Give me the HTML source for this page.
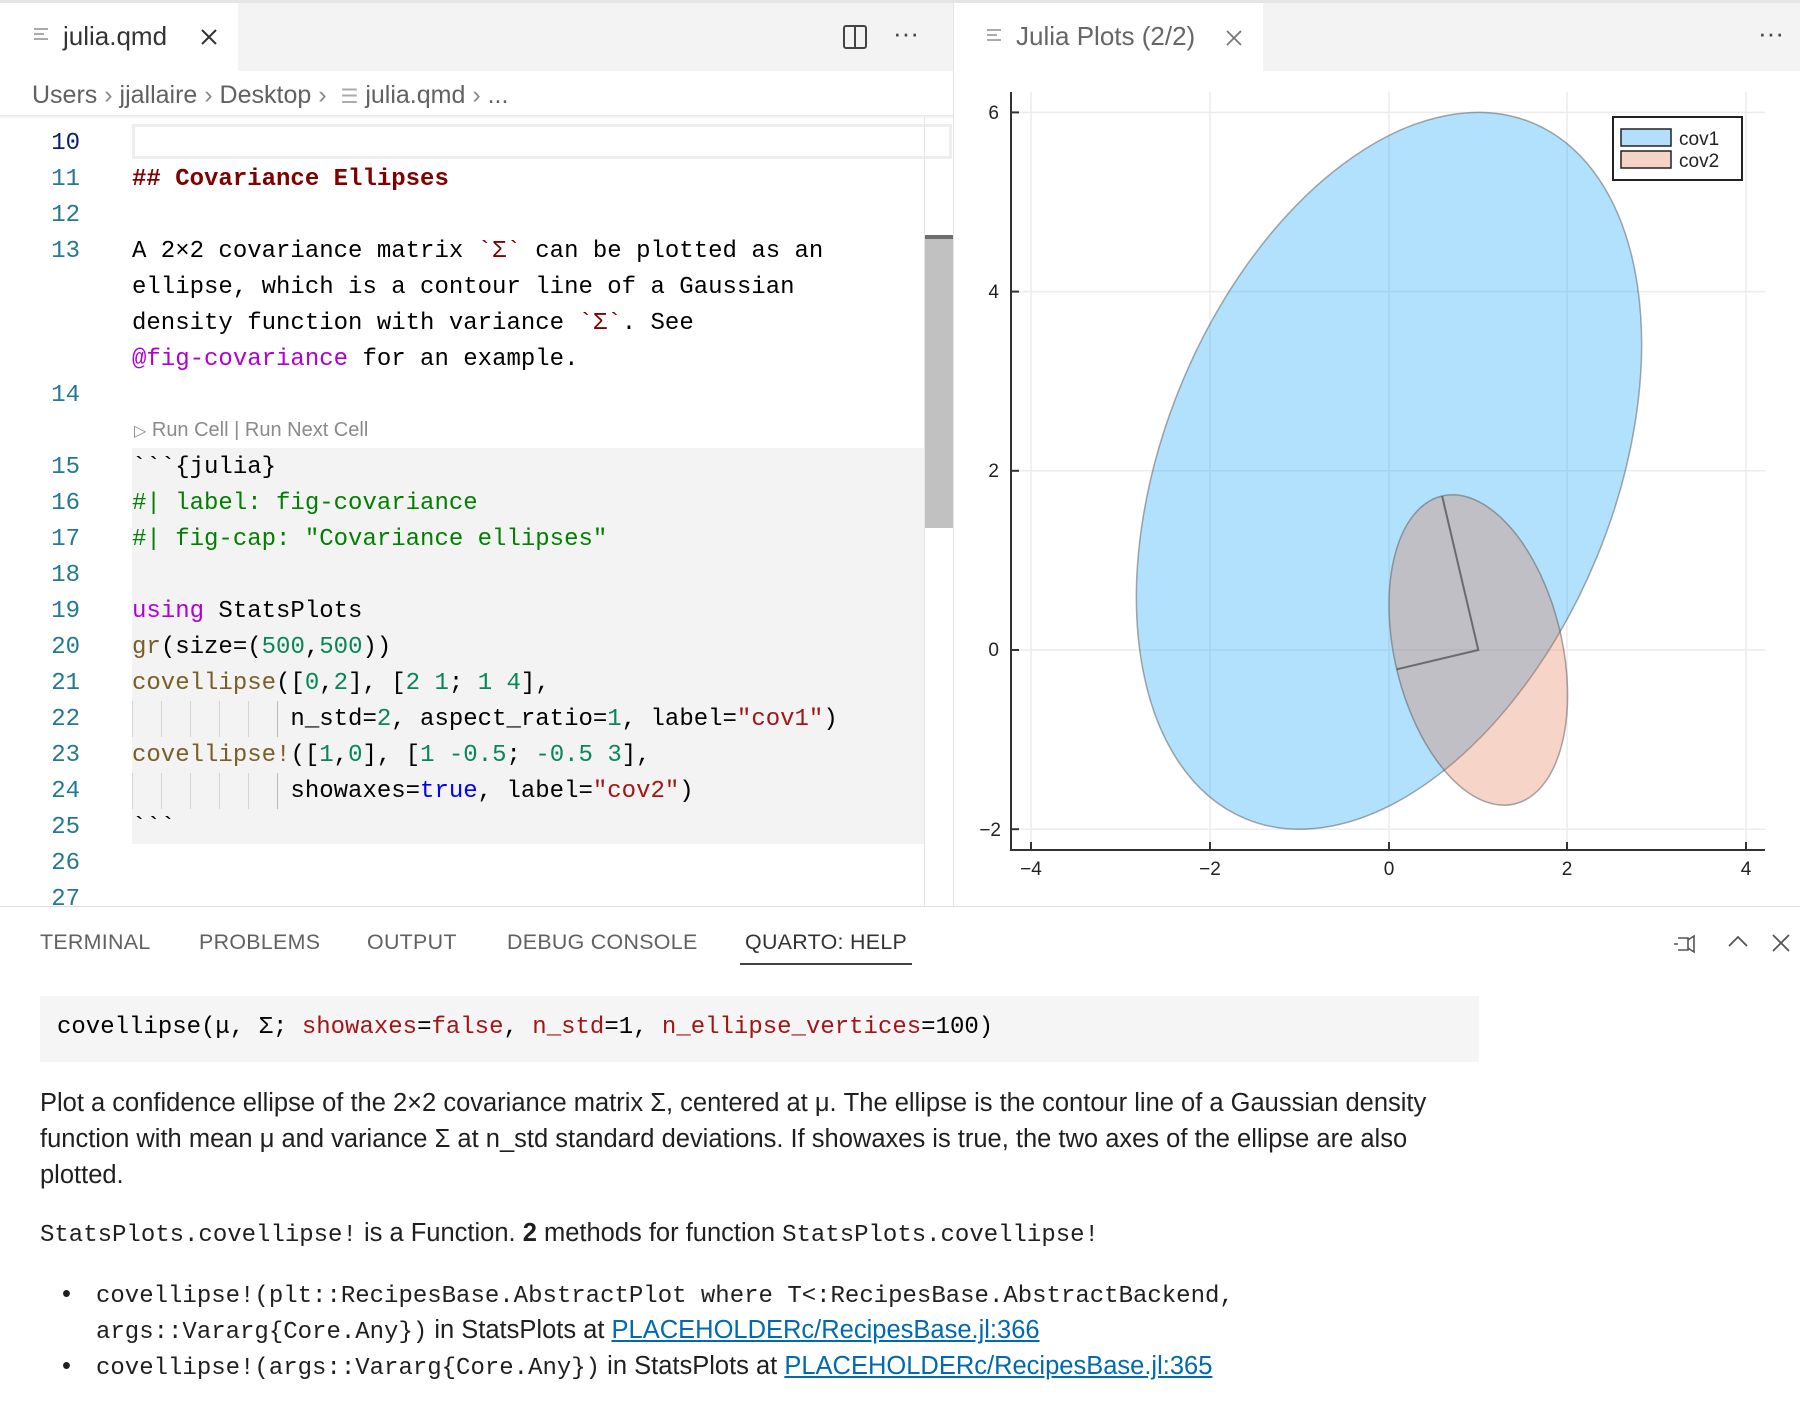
<!DOCTYPE html>
<html><head><meta charset="utf-8"><style>
*{margin:0;padding:0;box-sizing:border-box}
body{width:1800px;height:1406px;background:#fff;position:relative;overflow:hidden;font-family:"Liberation Sans",sans-serif}
.abs{position:absolute}
.mono{font-family:"Liberation Mono","DejaVu Sans Mono",monospace}
.ln{position:absolute;left:0;width:80px;text-align:right;color:#237893;font-size:24px;line-height:36px}
.cl{position:absolute;left:132px;font-size:24px;line-height:36px;white-space:pre;color:#000}
.bc{color:#616161;font-size:25px}
.pt{position:absolute;top:930px;font-size:21.4px;color:#616161;letter-spacing:.3px}
.hp{position:absolute;left:40px;font-size:25.5px;line-height:36px;color:#1f1f1f;white-space:nowrap}
.hp code,.hc{font-family:"Liberation Mono",monospace;font-size:24px}
a{color:#006ab1;text-decoration:underline}
.g{position:absolute;width:1px;height:36px;background:#d4d4d4}
</style></head><body>
<div class="abs" style="left:0;top:0;width:1800px;height:3px;background:#e5e5e5"></div>
<div class="abs" style="left:0;top:3px;width:953px;height:68px;background:#f3f3f3"></div>
<div class="abs" style="left:0;top:3px;width:238px;height:68px;background:#fff"></div>
<div class="abs" style="left:34px;top:28px;width:16px;height:16px">
<div style="height:2px;background:#aaa;margin-bottom:3px;width:14px"></div><div style="height:2px;background:#aaa;margin-bottom:3px;width:10px"></div><div style="height:2px;background:#aaa;margin-bottom:3px;width:14px"></div></div>
<div class="abs" style="left:63px;top:21px;font-size:26px;color:#333">julia.qmd</div>
<svg class="abs" style="left:199px;top:27px" width="20" height="20"><path d="M3 3L17 17M17 3L3 17" stroke="#333" stroke-width="2"/></svg>
<svg class="abs" style="left:842px;top:24px" width="26" height="26"><rect x="2" y="2" width="22" height="22" rx="2" fill="none" stroke="#444" stroke-width="2"/><line x1="13" y1="2" x2="13" y2="24" stroke="#444" stroke-width="2"/></svg>
<div class="abs" style="left:893px;top:18px;font-size:26px;color:#444">···</div>
<div class="abs bc" style="left:32px;top:81px;white-space:nowrap">Users <span style="color:#888">›</span> jjallaire <span style="color:#888">›</span> Desktop <span style="color:#888">›</span> &nbsp;<span style="color:#aaa;font-size:20px">☰</span> julia.qmd <span style="color:#888">›</span> ...</div>
<div class="abs" style="left:0;top:115px;width:953px;height:4px;background:linear-gradient(#e8e8e8,#fff)"></div>
<div class="abs" style="left:132px;top:124px;width:820px;height:35px;border:3px solid #eeeeee"></div>
<div class="abs" style="left:132px;top:448px;width:792px;height:396px;background:#f3f3f3"></div>
<div class="abs" style="left:924px;top:117px;width:1px;height:790px;background:#e5e5e5"></div>
<div class="abs" style="left:925px;top:235px;width:28px;height:293px;background:#c1c1c1"></div>
<div class="abs" style="left:925px;top:235px;width:28px;height:4px;background:#6e6e6e"></div>
<div class="abs" style="left:953px;top:3px;width:1px;height:904px;background:#e5e5e5"></div>
<div class="mono" style="position:absolute;left:0;top:3px;width:953px;height:0">
<div class="ln" style="top:123px;color:#0b216f">10</div>
<div class="ln" style="top:159px">11</div>
<div class="ln" style="top:195px">12</div>
<div class="ln" style="top:231px">13</div>
<div class="ln" style="top:375px">14</div>
<div class="ln" style="top:447px">15</div>
<div class="ln" style="top:483px">16</div>
<div class="ln" style="top:519px">17</div>
<div class="ln" style="top:555px">18</div>
<div class="ln" style="top:591px">19</div>
<div class="ln" style="top:627px">20</div>
<div class="ln" style="top:663px">21</div>
<div class="ln" style="top:699px">22</div>
<div class="ln" style="top:735px">23</div>
<div class="ln" style="top:771px">24</div>
<div class="ln" style="top:807px">25</div>
<div class="ln" style="top:843px">26</div>
<div class="ln" style="top:879px">27</div>
<div class="cl" style="top:159px;color:#800000;font-weight:bold">## Covariance Ellipses</div>
<div class="cl" style="top:231px">A 2×2 covariance matrix <span style="color:#800000">&#96;Σ&#96;</span> can be plotted as an</div>
<div class="cl" style="top:267px">ellipse, which is a contour line of a Gaussian</div>
<div class="cl" style="top:303px">density function with variance <span style="color:#800000">&#96;Σ&#96;</span>. See</div>
<div class="cl" style="top:339px"><span style="color:#af00db">@fig-covariance</span> for an example.</div>
<div class="cl" style="top:447px">&#96;&#96;&#96;{julia}</div>
<div class="cl" style="top:483px;color:#008000">#| label: fig-covariance</div>
<div class="cl" style="top:519px;color:#008000">#| fig-cap: "Covariance ellipses"</div>
<div class="cl" style="top:591px"><span style="color:#af00db">using</span> StatsPlots</div>
<div class="cl" style="top:627px"><span style="color:#795e26">gr</span>(size=(<span style="color:#098658">500</span>,<span style="color:#098658">500</span>))</div>
<div class="cl" style="top:663px"><span style="color:#795e26">covellipse</span>([<span style="color:#098658">0</span>,<span style="color:#098658">2</span>], [<span style="color:#098658">2</span> <span style="color:#098658">1</span>; <span style="color:#098658">1</span> <span style="color:#098658">4</span>],</div>
<div class="cl" style="top:699px">           n_std=<span style="color:#098658">2</span>, aspect_ratio=<span style="color:#098658">1</span>, label=<span style="color:#a31515">"cov1"</span>)</div>
<div class="cl" style="top:735px"><span style="color:#795e26">covellipse!</span>([<span style="color:#098658">1</span>,<span style="color:#098658">0</span>], [<span style="color:#098658">1</span> <span style="color:#098658">-0.5</span>; <span style="color:#098658">-0.5</span> <span style="color:#098658">3</span>],</div>
<div class="cl" style="top:771px">           showaxes=<span style="color:#0000ff">true</span>, label=<span style="color:#a31515">"cov2"</span>)</div>
<div class="cl" style="top:807px">&#96;&#96;&#96;</div>
</div>
<div class="g" style="left:132px;top:701px"></div><div class="g" style="left:161px;top:701px"></div><div class="g" style="left:190px;top:701px"></div><div class="g" style="left:219px;top:701px"></div><div class="g" style="left:248px;top:701px"></div><div class="g" style="left:277px;top:701px;background:#bbb"></div>
<div class="g" style="left:132px;top:773px"></div><div class="g" style="left:161px;top:773px"></div><div class="g" style="left:190px;top:773px"></div><div class="g" style="left:219px;top:773px"></div><div class="g" style="left:248px;top:773px"></div><div class="g" style="left:277px;top:773px;background:#bbb"></div>
<div class="abs" style="left:134px;top:419px;font-size:20px;color:#8a8a8a;white-space:nowrap"><span style="font-size:16px">▷</span> Run Cell | Run Next Cell</div>
<div class="abs" style="left:954px;top:3px;width:846px;height:68px;background:#f3f3f3"></div>
<div class="abs" style="left:954px;top:3px;width:309px;height:68px;background:#fff"></div>
<div class="abs" style="left:987px;top:29px;width:16px;height:16px">
<div style="height:2px;background:#aaa;margin-bottom:3px;width:14px"></div><div style="height:2px;background:#aaa;margin-bottom:3px;width:10px"></div><div style="height:2px;background:#aaa;margin-bottom:3px;width:14px"></div></div>
<div class="abs" style="left:1016px;top:21px;font-size:26px;color:#666;white-space:nowrap">Julia Plots (2/2)</div>
<svg class="abs" style="left:1224px;top:28px" width="20" height="20"><path d="M3 3L17 17M17 3L3 17" stroke="#777" stroke-width="1.8"/></svg>
<div class="abs" style="left:1758px;top:18px;font-size:26px;color:#444">···</div>
<svg class="abs" style="left:0;top:0" width="1800" height="907">
<g stroke="#ececec" stroke-width="1.5">
<line x1="1031" y1="92" x2="1031" y2="850"/><line x1="1210" y1="92" x2="1210" y2="850"/><line x1="1389" y1="92" x2="1389" y2="850"/><line x1="1567" y1="92" x2="1567" y2="850"/><line x1="1746" y1="92" x2="1746" y2="850"/>
<line x1="1011" y1="112.4" x2="1765" y2="112.4"/><line x1="1011" y1="291.6" x2="1765" y2="291.6"/><line x1="1011" y1="470.8" x2="1765" y2="470.8"/><line x1="1011" y1="650" x2="1765" y2="650"/><line x1="1011" y1="829.2" x2="1765" y2="829.2"/>
</g>
<g transform="translate(1389,650) scale(89.3,-89.6)">
<ellipse cx="0" cy="0" rx="4.202" ry="2.519" transform="translate(0,2) rotate(67.5)" fill="#009af9" fill-opacity="0.3" stroke="#555" stroke-opacity="0.5" stroke-width="1.5" vector-effect="non-scaling-stroke"/>
<ellipse cx="0" cy="0" rx="1.766" ry="0.939" transform="translate(1,0) rotate(103.3)" fill="#e26f46" fill-opacity="0.3" stroke="#555" stroke-opacity="0.5" stroke-width="1.5" vector-effect="non-scaling-stroke"/>
<polyline points="0.595,1.718 1,0 0.086,-0.216" fill="none" stroke="#555" stroke-width="2" vector-effect="non-scaling-stroke" stroke-opacity="0.8"/>
</g>
<g stroke="#333" stroke-width="2"><line x1="1011" y1="92" x2="1011" y2="851"/><line x1="1010" y1="850" x2="1765" y2="850"/>
<line x1="1031" y1="850" x2="1031" y2="842"/><line x1="1210" y1="850" x2="1210" y2="842"/><line x1="1389" y1="850" x2="1389" y2="842"/><line x1="1567" y1="850" x2="1567" y2="842"/><line x1="1746" y1="850" x2="1746" y2="842"/>
<line x1="1011" y1="112.4" x2="1019" y2="112.4"/><line x1="1011" y1="291.6" x2="1019" y2="291.6"/><line x1="1011" y1="470.8" x2="1019" y2="470.8"/><line x1="1011" y1="650" x2="1019" y2="650"/><line x1="1011" y1="829.2" x2="1019" y2="829.2"/></g>
<g font-family="Liberation Sans,sans-serif" font-size="19" fill="#222" text-anchor="middle">
<text x="1031" y="875">−4</text><text x="1210" y="875">−2</text><text x="1389" y="875">0</text><text x="1567" y="875">2</text><text x="1746" y="875">4</text>
<text x="999" y="119" text-anchor="end">6</text><text x="999" y="298" text-anchor="end">4</text><text x="999" y="477" text-anchor="end">2</text><text x="999" y="656" text-anchor="end">0</text><text x="1001" y="836" text-anchor="end">−2</text>
</g>
<rect x="1613" y="117" width="129" height="63" fill="#fff" stroke="#222" stroke-width="2"/>
<rect x="1621" y="129" width="50" height="17" fill="#b3dffd" stroke="#222" stroke-width="1.5"/>
<rect x="1621" y="151" width="50" height="17" fill="#f6d3c7" stroke="#222" stroke-width="1.5"/>
<text x="1679" y="145" font-family="Liberation Sans,sans-serif" font-size="19" fill="#222">cov1</text>
<text x="1679" y="167" font-family="Liberation Sans,sans-serif" font-size="19" fill="#222">cov2</text>
</svg>
<div class="abs" style="left:0;top:906px;width:1800px;height:1px;background:#ddd"></div>
<div class="pt" style="left:40px">TERMINAL</div>
<div class="pt" style="left:199px">PROBLEMS</div>
<div class="pt" style="left:367px">OUTPUT</div>
<div class="pt" style="left:507px">DEBUG CONSOLE</div>
<div class="pt" style="left:745px;color:#333">QUARTO: HELP</div>
<div class="abs" style="left:740px;top:963px;width:172px;height:2px;background:#424242"></div>
<svg class="abs" style="left:1672px;top:932px" width="26" height="24"><path d="M6 6H16V18H6M2 12H6M16 8L22 4V20L16 16" fill="none" stroke="#555" stroke-width="1.6"/></svg>
<svg class="abs" style="left:1726px;top:932px" width="24" height="20"><path d="M3 14L12 5L21 14" fill="none" stroke="#555" stroke-width="1.8"/></svg>
<svg class="abs" style="left:1770px;top:932px" width="22" height="22"><path d="M3 3L19 19M19 3L3 19" stroke="#555" stroke-width="1.8"/></svg>
<div class="abs" style="left:40px;top:996px;width:1439px;height:66px;background:#f5f5f5"></div>
<div class="abs hc" style="left:57px;top:1014px;color:#000;white-space:pre">covellipse(μ, Σ; <span style="color:#a31515">showaxes</span>=<span style="color:#a31515">false</span>, <span style="color:#a31515">n_std</span>=1, <span style="color:#a31515">n_ellipse_vertices</span>=100)</div>
<div class="hp" style="top:1085px">Plot a confidence ellipse of the 2×2 covariance matrix Σ, centered at μ. The ellipse is the contour line of a Gaussian density</div>
<div class="hp" style="top:1121px">function with mean μ and variance Σ at n_std standard deviations. If showaxes is true, the two axes of the ellipse are also</div>
<div class="hp" style="top:1157px">plotted.</div>
<div class="hp" style="top:1215px"><code>StatsPlots.covellipse!</code> is a Function. <b>2</b> methods for function <code>StatsPlots.covellipse!</code></div>
<div class="hp" style="top:1276px;left:62px">•</div>
<div class="hp" style="top:1276px;left:96px"><code>covellipse!(plt::RecipesBase.AbstractPlot where T&lt;:RecipesBase.AbstractBackend,</code></div>
<div class="hp" style="top:1312px;left:96px"><code>args::Vararg{Core.Any})</code> in StatsPlots at <a>PLACEHOLDERc/RecipesBase.jl:366</a></div>
<div class="hp" style="top:1348px;left:62px">•</div>
<div class="hp" style="top:1348px;left:96px"><code>covellipse!(args::Vararg{Core.Any})</code> in StatsPlots at <a>PLACEHOLDERc/RecipesBase.jl:365</a></div>
</body></html>
